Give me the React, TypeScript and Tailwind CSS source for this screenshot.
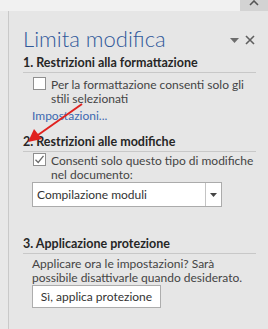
import React from 'react';

const font = { fontFamily: 'Lato, "Noto Sans", sans-serif' };

function Checkbox({ checked }: { checked?: boolean }): React.ReactElement {
  return (
    <span className="mt-[-1px] flex h-[13px] w-[13px] shrink-0 items-center justify-center border border-[#8f8f8f] bg-white">
      {checked && (
        <svg width="11" height="11" viewBox="0 0 11 11">
          <path d="M1.5 5.8 L4.2 8.5 L9.5 1.8" fill="none" stroke="#6a6a6a" strokeWidth="1.3" />
        </svg>
      )}
    </span>
  );
}

function SectionTitle({ children }: { children: React.ReactNode }): React.ReactElement {
  return (
    <div className="border-b border-[#c8c8c8] pb-[1px] text-[12.5px] font-bold leading-[16px] text-[#262626]">
      {children}
    </div>
  );
}

export default function App(): React.ReactElement {
  return (
    <div className="relative h-[329px] w-[268px] overflow-hidden bg-[#e6e6e6] text-[#444]" style={font}>
      {/* striscia superiore */}
      <div className="flex h-[11px]">
        <div className="flex-1 bg-[#f1f1f1]" />
        <div className="flex w-[28px] justify-center bg-[#d3d3d3]">
          <svg width="10" height="6" viewBox="0 0 10 6">
            <path d="M1 5 L5 1 L9 5" fill="none" stroke="#555" strokeWidth="1.6" />
          </svg>
        </div>
      </div>

      <div className="flex h-[318px]">
        <div className="w-[8px] bg-[#e8e8e8]" />
        <div className="flex-1 border-l border-[#c9c9c9] pl-[14px] pr-[12px]">
          {/* intestazione */}
          <div className="mt-[13px] flex items-center justify-between">
            <div className="text-[22px] font-light leading-[30px] text-[#30589a]">Limita modifica</div>
            <div className="mr-[1px] flex items-center gap-[6px] pt-[2px]">
              <svg width="9" height="5" viewBox="0 0 9 5">
                <path d="M0 0 H9 L4.5 5 Z" fill="#6d6d6d" />
              </svg>
              <svg width="10" height="10" viewBox="0 0 10 10">
                <path d="M1 1 L9 9 M9 1 L1 9" stroke="#5f5f5f" strokeWidth="1.6" />
              </svg>
            </div>
          </div>

          {/* 1 */}
          <div className="mt-[1px]">
            <SectionTitle>1. Restrizioni alla formattazione</SectionTitle>
            <div className="mt-[5px] flex gap-[5px] pl-[10px] text-[12px] leading-[14px]">
              <Checkbox />
              <div>Per la formattazione consenti solo gli stili selezionati</div>
            </div>
            <div className="mt-[3px] pl-[9px] text-[12px] leading-[14px] text-[#3d69b0]">Impostazioni...</div>
          </div>

          {/* 2 */}
          <div className="mt-[11px]">
            <SectionTitle>2. Restrizioni alle modifiche</SectionTitle>
            <div className="mt-[2px] flex gap-[5px] pl-[10px] text-[12px] leading-[14px]">
              <Checkbox checked />
              <div>Consenti solo questo tipo di modifiche nel documento:</div>
            </div>
            <div className="ml-[9px] mt-0 flex h-[25px] w-[190px] border border-[#ababab] bg-white text-[12px]">
              <div className="flex flex-1 items-center pl-[4px] text-[#333]">Compilazione moduli</div>
              <div className="flex w-[16px] items-center justify-center border-l border-[#c4c4c4]">
                <svg width="7" height="4" viewBox="0 0 7 4">
                  <path d="M0 0 H7 L3.5 4 Z" fill="#444" />
                </svg>
              </div>
            </div>
          </div>

          {/* 3 */}
          <div className="mt-[29px]">
            <SectionTitle>3. Applicazione protezione</SectionTitle>
            <div className="mt-[3px] pl-[9px] text-[12px] leading-[14px]">
              Applicare ora le impostazioni? Sarà possibile disattivarle quando desiderato.
            </div>
            <div className="ml-[9px] mt-0 flex h-[23px] w-[129px] items-center justify-center border border-[#adadad] bg-white text-[12px] text-[#333]">
              Sì, applica protezione
            </div>
          </div>
        </div>
      </div>

      {/* freccia rossa */}
      <svg className="absolute left-0 top-0" width="268" height="329" viewBox="0 0 268 329">
        <path d="M82 104 L38 135" stroke="#e0221f" strokeWidth="2" />
        <path d="M28 142 L34 129 L42 139 Z" fill="#e0221f" />
      </svg>
    </div>
  );
}
